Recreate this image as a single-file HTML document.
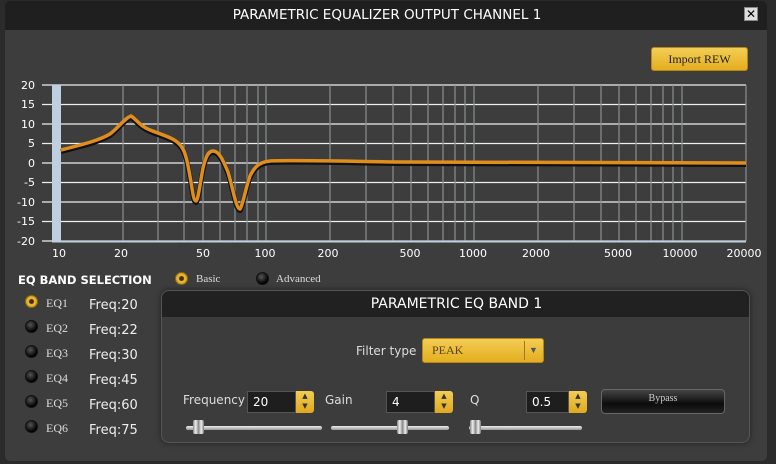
<!DOCTYPE html>
<html><head><meta charset="utf-8"><style>
*{margin:0;padding:0;box-sizing:border-box}
body{width:776px;height:464px;background:#2b2b2b;position:relative;overflow:hidden;font-family:"DejaVu Sans","Liberation Sans",sans-serif;color:#fff}
.a{position:absolute}
.win{left:4px;top:0;width:764px;height:462px;background:#3d3d3d;border-radius:6px;overflow:hidden;border:1px solid #2a2a2a}
.title{left:0;top:0;width:764px;height:29px;background:#1f1f1f;font-size:13.5px;text-align:center;line-height:28px}
.serif{font-family:"Liberation Serif",serif}
.gold{background:linear-gradient(#f3cd55,#e4ae1f);border-radius:3px;border:1px solid #b8871a;color:#222}
.rad{width:13px;height:13px;border-radius:50%;background:radial-gradient(circle at 40% 35%,#555,#000 70%);border:1px solid #111}
.radon{width:13px;height:13px;border-radius:50%;background:radial-gradient(circle,#4a3000 0 2px,#f0c040 3px,#d09a20 6px);border:1px solid #8a6a10}
.lbl{font-size:12px;color:#ddd}
.fq{font-size:13px;color:#eee}
.inp{background:#1e1e1e;border:1px solid #555;height:22px;font-size:12px;line-height:20px;padding-left:5px;color:#fff}
.spin{width:18px;height:22px;border-radius:0 3px 3px 0;background:linear-gradient(#f3cd55,#e0a81c);font-size:7px;color:#333;text-align:center;line-height:10px}
.track{height:4px;background:linear-gradient(#eee,#999);border-radius:2px}
.thumb{width:11px;height:14px;background:linear-gradient(90deg,#888,#eee,#888,#eee,#777);border-radius:2px}
</style></head><body>
<div class="a win">
 <div class="a title">PARAMETRIC EQUALIZER OUTPUT CHANNEL 1</div>
 <div class="a" style="left:739px;top:6px;width:14px;height:14px;background:#ddd;border:1px solid #888;color:#000;font-size:12px;font-weight:bold;line-height:12px;text-align:center">✕</div>
 <div class="a gold serif" style="left:646px;top:46px;width:97px;height:24px;font-size:12px;text-align:center;line-height:22px">Import REW</div>
</div>
<svg class="a" style="left:0;top:0" width="776" height="270">
 <g font-family="DejaVu Sans,sans-serif" font-size="11" fill="#fff" text-anchor="end">
  <text x="35" y="89">20</text><text x="35" y="108">15</text><text x="35" y="128">10</text><text x="35" y="147">5</text><text x="35" y="167">0</text><text x="35" y="186">-5</text><text x="35" y="206">-10</text><text x="35" y="225">-15</text><text x="35" y="245">-20</text>
 </g>
 <g stroke="#eee" stroke-width="1.2">
  <line x1="42" y1="85" x2="746" y2="85"/><line x1="42" y1="104.5" x2="746" y2="104.5"/><line x1="42" y1="124" x2="746" y2="124"/><line x1="42" y1="143.5" x2="746" y2="143.5"/><line x1="42" y1="163" x2="746" y2="163"/><line x1="42" y1="182.5" x2="746" y2="182.5"/><line x1="42" y1="202" x2="746" y2="202"/><line x1="42" y1="221.5" x2="746" y2="221.5"/><line x1="42" y1="241" x2="746" y2="241"/>
 </g>
 <g stroke="#8a8f8f" stroke-width="1.2">
  <line x1="123" y1="85" x2="123" y2="241"/><line x1="158" y1="85" x2="158" y2="241"/><line x1="184" y1="85" x2="184" y2="241"/><line x1="203" y1="85" x2="203" y2="241"/><line x1="220" y1="85" x2="220" y2="241"/><line x1="235" y1="85" x2="235" y2="241"/><line x1="247" y1="85" x2="247" y2="241"/><line x1="258" y1="85" x2="258" y2="241"/><line x1="266" y1="85" x2="266" y2="241"/><line x1="330" y1="85" x2="330" y2="241"/><line x1="366" y1="85" x2="366" y2="241"/><line x1="393" y1="85" x2="393" y2="241"/><line x1="411" y1="85" x2="411" y2="241"/><line x1="428" y1="85" x2="428" y2="241"/><line x1="443" y1="85" x2="443" y2="241"/><line x1="455" y1="85" x2="455" y2="241"/><line x1="465" y1="85" x2="465" y2="241"/><line x1="474" y1="85" x2="474" y2="241"/><line x1="538" y1="85" x2="538" y2="241"/><line x1="574" y1="85" x2="574" y2="241"/><line x1="601" y1="85" x2="601" y2="241"/><line x1="619" y1="85" x2="619" y2="241"/><line x1="636" y1="85" x2="636" y2="241"/><line x1="651" y1="85" x2="651" y2="241"/><line x1="663" y1="85" x2="663" y2="241"/><line x1="673" y1="85" x2="673" y2="241"/><line x1="682" y1="85" x2="682" y2="241"/><line x1="746" y1="85" x2="746" y2="241"/>
 </g>
 <rect x="52" y="85" width="9" height="157" fill="#c0cfe0"/>
 <line x1="52" y1="241.5" x2="746" y2="241.5" stroke="#c0cfe0" stroke-width="2"/>
 <path d="M61 150 C85 144 100 140 110 134 C118 128 125 118 131 116 C137 120 140 126 150 130 C165 136 175 138 181 146 C186 152 188 165 191 182 C193 195 194 201 196 201 C198 200 199 190 203 168 C206 155 209 151 213 151 C219 151 223 160 228 172 C233 188 236 209 240 209 C243 205 245 190 250 176 C255 166 260 162 270 161 C290 160 330 161 400 162 L746 163" fill="none" stroke="#111" stroke-width="5" transform="translate(0,1.5)"/>
 <path d="M61 150 C85 144 100 140 110 134 C118 128 125 118 131 116 C137 120 140 126 150 130 C165 136 175 138 181 146 C186 152 188 165 191 182 C193 195 194 201 196 201 C198 200 199 190 203 168 C206 155 209 151 213 151 C219 151 223 160 228 172 C233 188 236 209 240 209 C243 205 245 190 250 176 C255 166 260 162 270 161 C290 160 330 161 400 162 L746 163" fill="none" stroke="#e08d1c" stroke-width="3.5"/>
 <g font-family="DejaVu Sans,sans-serif" font-size="11" fill="#fff" text-anchor="middle">
  <text x="59" y="257">10</text><text x="121" y="257">20</text><text x="203" y="257">50</text><text x="265" y="257">100</text><text x="328" y="257">200</text><text x="410" y="257">500</text><text x="473" y="257">1000</text><text x="536" y="257">2000</text><text x="618" y="257">5000</text><text x="680" y="257">10000</text><text x="744" y="257">20000</text>
 </g>
</svg>
<div class="a" style="left:18px;top:273px;font-size:11.5px;font-weight:bold;color:#fff">EQ BAND SELECTION</div>
<div class="a radon" style="left:175px;top:272px"></div><div class="a serif lbl" style="left:196px;top:273px;font-size:11px">Basic</div>
<div class="a rad" style="left:256px;top:272px"></div><div class="a serif lbl" style="left:276px;top:273px;font-size:11px">Advanced</div>
<div class="a radon" style="left:25px;top:295px"></div><div class="a serif lbl" style="left:46px;top:296px">EQ1</div><div class="a fq" style="left:89px;top:298px">Freq:20</div>
<div class="a rad" style="left:25px;top:320px"></div><div class="a serif lbl" style="left:46px;top:321px">EQ2</div><div class="a fq" style="left:89px;top:323px">Freq:22</div>
<div class="a rad" style="left:25px;top:345px"></div><div class="a serif lbl" style="left:46px;top:346px">EQ3</div><div class="a fq" style="left:89px;top:348px">Freq:30</div>
<div class="a rad" style="left:25px;top:370px"></div><div class="a serif lbl" style="left:46px;top:371px">EQ4</div><div class="a fq" style="left:89px;top:373px">Freq:45</div>
<div class="a rad" style="left:25px;top:395px"></div><div class="a serif lbl" style="left:46px;top:396px">EQ5</div><div class="a fq" style="left:89px;top:398px">Freq:60</div>
<div class="a rad" style="left:25px;top:420px"></div><div class="a serif lbl" style="left:46px;top:421px">EQ6</div><div class="a fq" style="left:89px;top:423px">Freq:75</div>
<div class="a" style="left:161px;top:290px;width:589px;height:153px;background:#3c3c3c;border-radius:8px;overflow:hidden;border:1px solid #555;box-shadow:0 0 6px #222">
 <div class="a" style="left:0;top:0;width:589px;height:26px;background:#212121;text-align:center;font-size:14px;line-height:26px">PARAMETRIC EQ BAND 1</div>
</div>
<div class="a lbl" style="left:356px;top:344px">Filter type</div>
<div class="a gold serif" style="left:422px;top:338px;width:122px;height:25px;font-size:12px;line-height:23px;padding-left:9px;color:#5a4510">PEAK<span class="a" style="left:101px;top:2px;width:1px;height:19px;background:#a07818"></span><span class="a" style="left:106px;top:0;font-size:9px;color:#555">▼</span></div>
<div class="a lbl" style="left:183px;top:393px">Frequency</div>
<div class="a inp" style="left:247px;top:391px;width:49px">20</div><div class="a spin" style="left:296px;top:391px">▲<br>▼</div>
<div class="a lbl" style="left:325px;top:393px">Gain</div>
<div class="a inp" style="left:386px;top:391px;width:49px">4</div><div class="a spin" style="left:435px;top:391px">▲<br>▼</div>
<div class="a lbl" style="left:470px;top:393px">Q</div>
<div class="a inp" style="left:526px;top:391px;width:43px">0.5</div><div class="a spin" style="left:569px;top:391px">▲<br>▼</div>
<div class="a serif" style="left:601px;top:389px;width:124px;height:25px;border-radius:4px;background:linear-gradient(#444,#0c0c0c 60%,#222);border:1px solid #666;font-size:10px;text-align:center;color:#ccc;line-height:18px">Bypass</div>
<div class="a track" style="left:186px;top:426px;width:136px"></div><div class="a thumb" style="left:193px;top:420px"></div>
<div class="a track" style="left:331px;top:426px;width:118px"></div><div class="a thumb" style="left:397px;top:420px"></div>
<div class="a track" style="left:469px;top:426px;width:113px"></div><div class="a thumb" style="left:470px;top:420px"></div>
</body></html>
